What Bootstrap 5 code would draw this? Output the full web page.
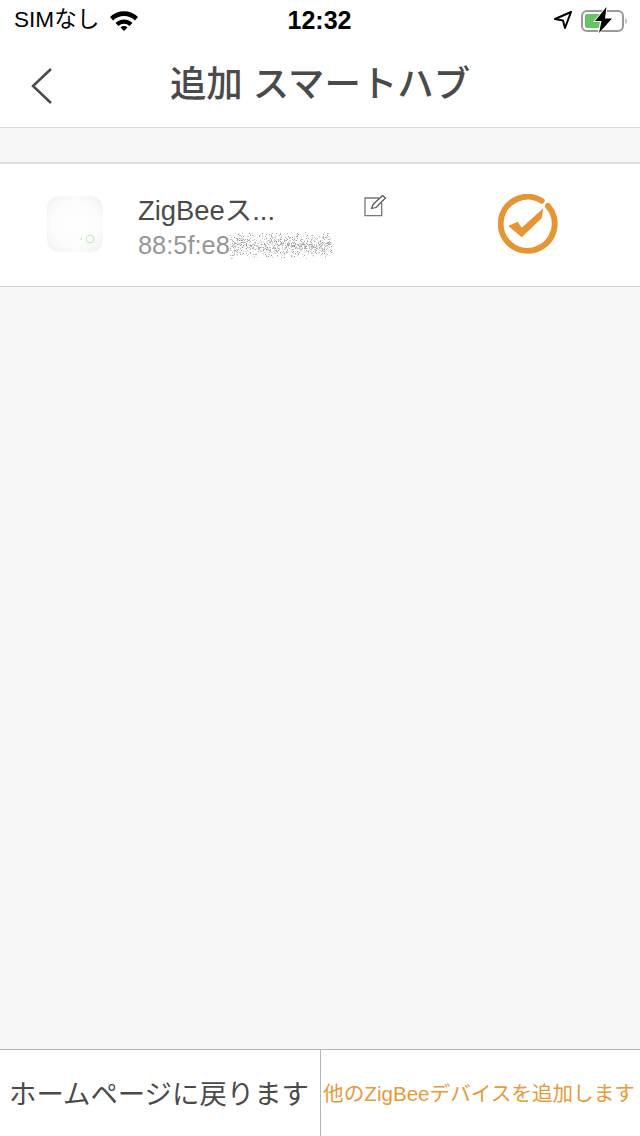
<!DOCTYPE html>
<html lang="ja">

<head>
  <meta charset="UTF-8">
  <meta name="viewport" content="width=device-width, initial-scale=1.0">
  <title>追加 スマートハブ</title>
  <link href="https://cdn.jsdelivr.net/npm/bootstrap@5.3.0/dist/css/bootstrap.min.css" rel="stylesheet">
  <style>
    html, body {
      height: 100%;
    }

    body {
      background: #f7f7f7;
      font-family: "Liberation Sans", "Noto Sans CJK JP", sans-serif;
      color: #4a4a4a;
      overflow: hidden;
    }

    .app-screen {
      height: 1136px;
    }

    .status-strip {
      height: 40px;
      padding: 0 11px 0 14px;
      color: #000;
      font-size: 22.6px;
    }

    .status-side {
      width: 250px;
    }

    .wifi-gap {
      gap: 10px;
    }

    .status-time {
      font-size: 25px;
      font-weight: 700;
      padding-top: 2px;
      margin-left: -4px;
    }

    .title-strip {
      height: 88px;
      border-bottom: 1px solid #dedede;
    }

    .back-btn {
      left: 30px;
      top: 27px;
      line-height: 0;
    }

    .page-title {
      font-size: 36.4px;
      font-weight: 500;
      margin: 0;
      padding-top: 3px;
      color: #4a4a4a;
    }

    .gap-band {
      height: 36px;
      border-bottom: 2px solid #dedede;
    }

    .hub-row {
      height: 123px;
      border-bottom: 1px solid #d4d4d4;
    }

    .hub-thumb {
      left: 47px;
      top: 32px;
    }

    .hub-text {
      left: 138px;
      top: 28px;
    }

    .hub-name {
      font-size: 27.4px;
      line-height: 38px;
    }

    .hub-mac {
      font-size: 25.4px;
      line-height: 30px;
      color: #969696;
    }

    .edit-icon {
      left: 364px;
      top: 30px;
    }

    .check-icon {
      left: 498px;
      top: 30px;
    }

    .foot-bar {
      height: 87px;
      border-top: 1px solid #b4b4b4;
    }

    .foot-btn {
      width: 50%;
      background: transparent;
      border: 0;
      white-space: nowrap;
    }

    .foot-home {
      font-size: 27.4px;
      color: #4a4a4a;
      padding: 3px 2px 0 0;
    }

    .foot-add {
      font-size: 20.6px;
      color: #e79a38;
      border-left: 1px solid #b4b4b4;
      padding: 2px 3px 0 0;
    }
  </style>
</head>

<body>
  <div class="app-screen d-flex flex-column">
    <div class="bg-white">
      <div class="status-strip d-flex align-items-center justify-content-between">
        <div class="status-side d-flex align-items-center wifi-gap">
          <span>SIMなし</span>
          <svg width="30" height="22" viewBox="0 0 30 22">
            <path d="M1 8 A20 20 0 0 1 29 8 L26 11.500 A15.500 15.500 0 0 0 4 11.500 Z" fill="#000"/>
            <path d="M6.500 14 A12 12 0 0 1 23.500 14 L20.500 17 A8 8 0 0 0 9.500 17 Z" fill="#000"/>
            <path d="M11.500 18.500 A5 5 0 0 1 18.500 18.500 L15 22 Z" fill="#000"/>
          </svg>
        </div>
        <div class="status-time">12:32</div>
        <div class="status-side d-flex align-items-center justify-content-end gap-2">
          <svg width="20" height="20" viewBox="0 0 20 20">
            <path d="M18 2 L2 9 L10 10.500 L12 18 Z" fill="none" stroke="#000" stroke-width="2" stroke-linejoin="round"/>
          </svg>
          <svg width="48" height="26" viewBox="0 0 48 26">
            <rect x="1" y="4" width="41" height="20" rx="5" fill="none" stroke="#9a9a9a" stroke-width="2"/>
            <rect x="4" y="7" width="20" height="14" rx="2" fill="#65c466"/>
            <path d="M44.500 10.500 Q47 14 44.500 17.500 Z" fill="#9a9a9a"/>
            <path d="M26 -2 L12 15 L19 15 L16 29 L33 10 L26 10 Z" fill="#fff"/>
            <path d="M25.500 0 L14 14 L20.500 14 L18 26 L31 11.500 L24 11.500 Z" fill="#000"/>
          </svg>
        </div>
      </div>
      <div class="title-strip position-relative d-flex align-items-center justify-content-center">
        <a class="back-btn position-absolute" href="#" aria-label="戻る">
          <svg width="24" height="38" viewBox="0 0 24 38">
            <path d="M21 2 L3 19 L21 36" fill="none" stroke="#4a4a4a" stroke-width="2.500"/>
          </svg>
        </a>
        <h1 class="page-title">追加 スマートハブ</h1>
      </div>
    </div>

    <div class="gap-band"></div>

    <div class="hub-row bg-white position-relative">
      <svg class="hub-thumb position-absolute" width="56" height="56" viewBox="0 0 56 56">
        <defs>
          <radialGradient id="hubFill" cx="0.5" cy="0.5" r="0.7">
            <stop offset="0" stop-color="#ffffff"/>
            <stop offset="0.6" stop-color="#fcfcfc"/>
            <stop offset="1" stop-color="#eeeeee"/>
          </radialGradient>
        </defs>
        <path d="M14 0 H42 Q56 0 56 14 V42 Q56 56 42 56 H14 Q0 56 0 42 V14 Q0 0 14 0 Z" fill="url(#hubFill)"/>
        <circle cx="43" cy="43" r="3.800" fill="none" stroke="#b6eca6" stroke-width="1"/>
        <circle cx="34" cy="43" r="0.800" fill="#a8e69a"/>
      </svg>
      <div class="hub-text position-absolute">
        <div class="hub-name">ZigBeeス...</div>
        <div class="hub-mac d-flex align-items-center">88:5f:e8<svg id="macNoise" width="102" height="30" viewBox="0 0 102 30"></svg></div>
      </div>
      <svg class="edit-icon position-absolute" width="24" height="24" viewBox="0 0 24 24">
        <path d="M15 4 H1 V21.700 H17.700 V9" fill="none" stroke="#777" stroke-width="1.300"/>
        <path d="M7.500 14.500 L9 10.500 L18.500 1.500 L21.500 4 L12 13.500 Z" fill="#fff" stroke="#555" stroke-width="1.200" stroke-linejoin="round"/>
      </svg>
      <svg class="check-icon position-absolute" width="60" height="60" viewBox="0 0 60 60">
        <path d="M43.700 6.700 A27 27 0 1 0 50 12" fill="none" stroke="#e59532" stroke-width="6" stroke-linecap="round"/>
        <path d="M10.300 32 L19.700 27.700 L23.700 33.700 L45.300 14.300 L43.700 24.300 L23.700 43.300 Z" fill="#e59532"/>
      </svg>
    </div>

    <div class="flex-grow-1"></div>

    <div class="foot-bar bg-white d-flex">
      <button class="foot-btn foot-home" type="button">ホームページに戻ります</button>
      <button class="foot-btn foot-add" type="button">他のZigBeeデバイスを追加します</button>
    </div>
  </div>

  <script>
    // scrambled part of the address, seeded so every render is the same
    let seed = 7;
    function rnd() {
      seed = (seed * 16807) % 2147483647;
      return seed / 2147483647;
    }
    const noise = document.getElementById("macNoise");
    let dots = "";
    for (let i = 0; i < 1100; i++) {
      const x = Math.floor(rnd() * 102);
      const y = Math.floor(2 + (rnd() + rnd()) / 2 * 27);
      const shade = 150 + Math.floor(rnd() * 95);
      dots += `<rect x="${x}" y="${y}" width="1" height="1" fill="rgb(${shade},${shade},${shade})"/>`;
    }
    noise.innerHTML = dots;
  </script>

  <script src="https://cdn.jsdelivr.net/npm/bootstrap@5.3.0/dist/js/bootstrap.bundle.min.js"></script>
</body>

</html>
